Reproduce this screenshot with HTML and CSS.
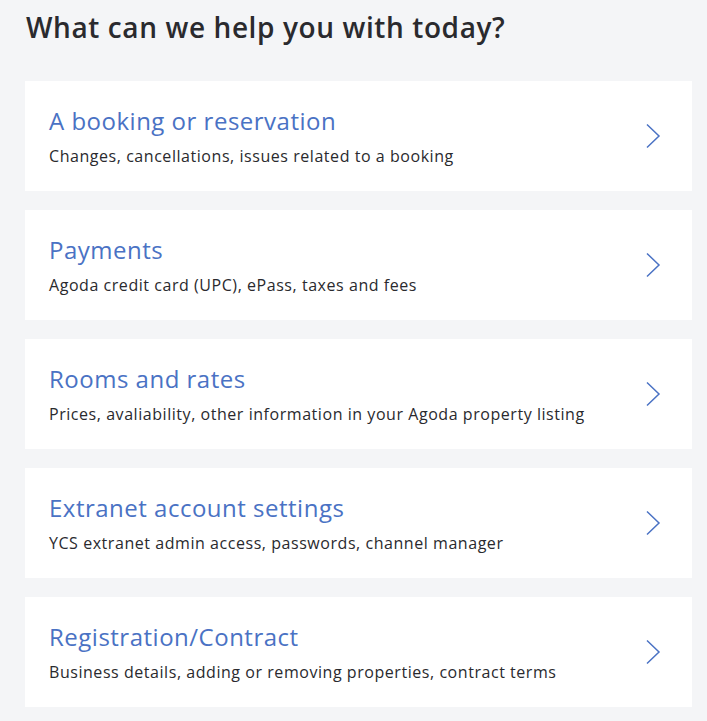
FILE: index.html
```html
<!DOCTYPE html>
<html>
<head>
<meta charset="utf-8">
<link rel="stylesheet" href="styles.css">
</head>
<body>
<main class="page">
  <h1 class="heading">What can we help you with today?</h1>
  <ul class="topics">
    <li class="topic">
      <div class="topic-text">
        <div class="topic-title">A booking or reservation</div>
        <div class="topic-desc">Changes, cancellations, issues related to a booking</div>
      </div>
      <svg class="chevron" viewBox="0 0 16 26" width="16" height="26"><path d="M2 1.5 L14 13 L2 24.5" fill="none" stroke="#4a72c4" stroke-width="1.5"/></svg>
    </li>
    <li class="topic">
      <div class="topic-text">
        <div class="topic-title">Payments</div>
        <div class="topic-desc">Agoda credit card (UPC), ePass, taxes and fees</div>
      </div>
      <svg class="chevron" viewBox="0 0 16 26" width="16" height="26"><path d="M2 1.5 L14 13 L2 24.5" fill="none" stroke="#4a72c4" stroke-width="1.5"/></svg>
    </li>
    <li class="topic">
      <div class="topic-text">
        <div class="topic-title">Rooms and rates</div>
        <div class="topic-desc">Prices, avaliability, other information in your Agoda property listing</div>
      </div>
      <svg class="chevron" viewBox="0 0 16 26" width="16" height="26"><path d="M2 1.5 L14 13 L2 24.5" fill="none" stroke="#4a72c4" stroke-width="1.5"/></svg>
    </li>
    <li class="topic">
      <div class="topic-text">
        <div class="topic-title">Extranet account settings</div>
        <div class="topic-desc">YCS extranet admin access, passwords, channel manager</div>
      </div>
      <svg class="chevron" viewBox="0 0 16 26" width="16" height="26"><path d="M2 1.5 L14 13 L2 24.5" fill="none" stroke="#4a72c4" stroke-width="1.5"/></svg>
    </li>
    <li class="topic">
      <div class="topic-text">
        <div class="topic-title">Registration/Contract</div>
        <div class="topic-desc">Business details, adding or removing properties, contract terms</div>
      </div>
      <svg class="chevron" viewBox="0 0 16 26" width="16" height="26"><path d="M2 1.5 L14 13 L2 24.5" fill="none" stroke="#4a72c4" stroke-width="1.5"/></svg>
    </li>
  </ul>
</main>
</body>
</html>
```

FILE: styles.css
```css
html, body {
  margin: 0;
  padding: 0;
  background: #f4f5f7;
}
body {
  font-family: "Open Sans", "Liberation Sans", sans-serif;
  color: #2a2a2e;
}
.page {
  padding: 8px 15px 0 25px;
}
.heading {
  margin: 0 0 0 1px;
  font-size: 28px;
  font-weight: 600;
  letter-spacing: 0.6px;
  line-height: 38px;
  color: #2a2a2e;
}
.topics {
  list-style: none;
  margin: 35px 0 0 0;
  padding: 0;
  display: flex;
  flex-direction: column;
  gap: 19px;
}
.topic {
  background: #fff;
  height: 110px;
  box-sizing: border-box;
  padding: 0 31px 0 24px;
  display: flex;
  align-items: center;
  justify-content: space-between;
}
.topic-text {
  display: flex;
  flex-direction: column;
  gap: 10px;
  margin-top: 2px;
}
.topic-title {
  font-size: 24px;
  letter-spacing: 0.5px;
  line-height: 28px;
  color: #4a72c4;
}
.topic-desc {
  font-size: 16px;
  letter-spacing: 0.55px;
  line-height: 22px;
  color: #2a2a2e;
}
.chevron {
  flex: none;
}
```
